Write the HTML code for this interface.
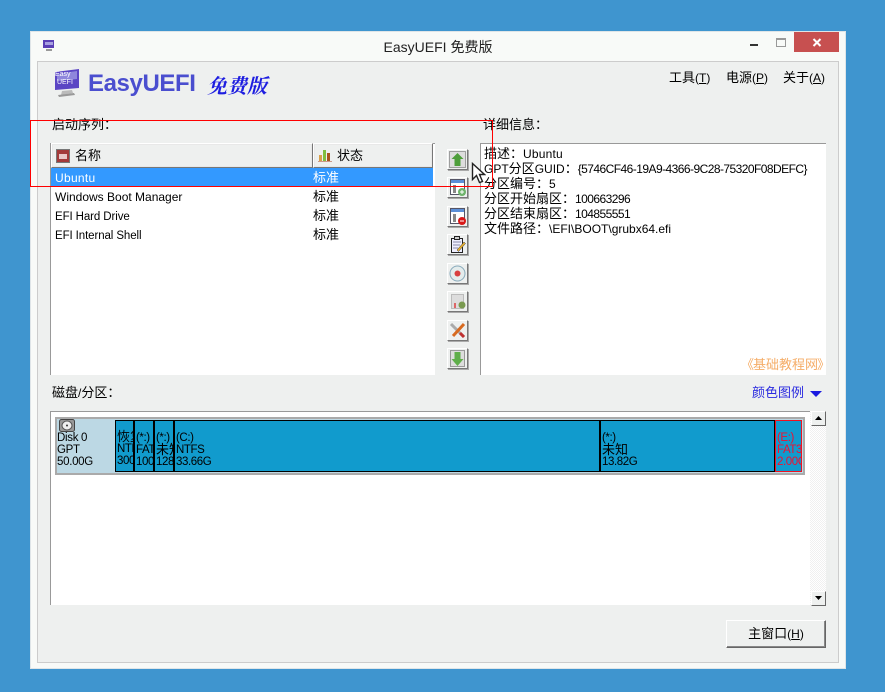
<!DOCTYPE html>
<html><head><meta charset="utf-8"><style>
*{box-sizing:border-box}
html,body{margin:0;padding:0;width:885px;height:692px;overflow:hidden;background:#3f95cf}
body{position:relative;font:13px "Liberation Sans","WenQuanYi Zen Hei","Noto Sans CJK SC",sans-serif;color:#000}
.a{position:absolute;white-space:nowrap}
.t{position:absolute;white-space:nowrap;line-height:15px}
.l{font-size:12px}
.n{font-size:12px;letter-spacing:-.55px}
.tb{position:absolute;left:447px;width:21px;height:21px;background:#eef0ef;border:1px solid;border-color:#fff #777 #777 #fff;box-shadow:1px 1px 0 #aaa}
.tb svg{display:block}
.p{position:absolute;top:420px;height:52px;background:#119bcd;border:1px solid #000;overflow:hidden;font-size:11.5px;letter-spacing:-.4px;line-height:12px;color:#000;padding-left:1px;padding-top:11px;white-space:nowrap}
.p span{display:block;height:12px}
.p .c{font-size:13px;letter-spacing:0}
.hd{position:absolute;top:143px;height:25px;background:#eef0ef;border:1px solid;border-color:#fff #777 #777 #fff;box-shadow:inset 0 0 0 1px #e8e8e8}
</style></head><body>
<div class="a" style="left:30px;top:31px;width:816px;height:638px;background:#f8faf8;border:1px solid #dfe5e8"></div>
<svg class="a" style="left:42px;top:39px" width="14" height="14" viewBox="0 0 14 14"><rect x="1" y="1" width="11" height="8" fill="#5a3fb5"/><rect x="3" y="3" width="8" height="3" fill="#a8a0e0"/><rect x="4" y="10" width="6" height="2" fill="#999"/></svg>
<div class="t" style="left:338px;width:200px;top:39px;text-align:center;font-size:14px;line-height:16px;color:#222">EasyUEFI 免费版</div>
<div class="a" style="left:750px;top:44px;width:8px;height:2px;background:#333"></div>
<div class="a" style="left:776px;top:38px;width:10px;height:9px;border:1px solid #999;border-top:2px solid #999;background:#f8faf8"></div>
<div class="a" style="left:794px;top:32px;width:45px;height:20px;background:#c75050"></div>
<svg class="a" style="left:812px;top:38px" width="10" height="9" viewBox="0 0 10 9"><path d="M1.500 1l7 7M8.500 1l-7 7" stroke="#fff" stroke-width="2"/></svg>

<div class="a" style="left:37px;top:61px;width:802px;height:602px;background:#eef0ef;border:1px solid #ccc"></div>

<svg class="a" style="left:53px;top:68px" width="28" height="30" viewBox="0 0 28 30"><path d="M2 4l24-3v19l-24 2z" fill="#5b45c4"/><path d="M4 6l20-3v8l-20 2z" fill="#8f86dc"/><path d="M9 23l10-1 1 3-12 2z" fill="#bbb"/><path d="M5 27l16-2 1 2-16 2z" fill="#999"/></svg>
<div class="t" style="left:55px;top:71px;font-size:7px;line-height:8px;color:#fff">Easy<br>&nbsp;UEFI</div>
<div class="t" style="left:88px;top:69px;font-size:24px;font-weight:bold;line-height:29px;color:#4a4ecf;letter-spacing:-.4px">EasyUEFI</div>
<div class="t" style="left:207px;top:73px;font-size:20px;line-height:24px;font-style:italic;font-weight:bold;color:#1d1de0;font-family:'Noto Serif CJK SC',serif">免费版</div>

<div class="t" style="left:669px;top:70px">工具<span class="l">(<u>T</u>)</span></div>
<div class="t" style="left:726px;top:70px">电源<span class="l">(<u>P</u>)</span></div>
<div class="t" style="left:783px;top:70px">关于<span class="l">(<u>A</u>)</span></div>

<div class="t" style="left:52px;top:117px">启动序列：</div>
<div class="t" style="left:483px;top:117px">详细信息：</div>

<div class="a" style="left:50px;top:143px;width:385px;height:232px;background:#fff;border-left:1px solid #999;border-top:1px solid #999"></div>
<div class="hd" style="left:51px;width:262px"></div>
<div class="hd" style="left:313px;width:120px"></div>
<svg class="a" style="left:56px;top:149px" width="14" height="14" viewBox="0 0 14 14"><rect x=".5" y=".5" width="13" height="13" fill="#a33a3a" stroke="#777"/><rect x="3" y="5" width="8" height="5" fill="#e8c8c8"/></svg>
<div class="t" style="left:75px;top:148px">名称</div>
<svg class="a" style="left:318px;top:148px" width="14" height="14" viewBox="0 0 14 14"><rect x="1" y="7" width="3" height="6" fill="#d9a04a"/><rect x="5" y="2" width="3" height="11" fill="#7fbf3f"/><rect x="9" y="5" width="3" height="8" fill="#a8541c"/><rect x="0" y="13" width="14" height="1" fill="#c98"/></svg>
<div class="t" style="left:337px;top:148px">状态</div>

<div class="a" style="left:51px;top:168px;width:382px;height:18px;background:#3399ff"></div>
<div class="t" style="left:55px;top:170px;color:#fff"><span class="l" style="letter-spacing:.3px">Ubuntu</span></div><div class="t" style="left:313px;top:170px;color:#fff">标准</div>
<div class="t" style="left:55px;top:189px"><span class="l">Windows Boot Manager</span></div><div class="t" style="left:313px;top:189px">标准</div>
<div class="t" style="left:55px;top:208px"><span style="font-size:11.5px;letter-spacing:-.1px">EFI Hard Drive</span></div><div class="t" style="left:313px;top:208px">标准</div>
<div class="t" style="left:55px;top:227px"><span style="font-size:11.5px;letter-spacing:-.1px">EFI Internal Shell</span></div><div class="t" style="left:313px;top:227px">标准</div>

<div class="tb" style="top:149px"><svg width="19" height="19" viewBox="0 0 19 19"><rect x="1.500" y="1.500" width="16" height="16" fill="#ddd" stroke="#555" stroke-dasharray="1 1"/><path d="M9.500 3l6 6h-3v7h-6V9h-3z" fill="#4d9e3a"/></svg></div>
<div class="tb" style="top:177px"><svg width="19" height="19" viewBox="0 0 19 19"><rect x="2.500" y="1.500" width="14" height="15" fill="#fff" stroke="#556"/><rect x="3" y="2" width="13" height="3" fill="#5b8fd8"/><rect x="5" y="7" width="3" height="8" fill="#888"/><circle cx="14" cy="14" r="4" fill="#6db36a"/><path d="M14 12v4M12 14h4" stroke="#fff"/></svg></div>
<div class="tb" style="top:206px"><svg width="19" height="19" viewBox="0 0 19 19"><rect x="2.500" y="1.500" width="14" height="15" fill="#fff" stroke="#556"/><rect x="3" y="2" width="13" height="3" fill="#5b8fd8"/><rect x="5" y="7" width="3" height="8" fill="#888"/><circle cx="14" cy="14" r="4" fill="#d81818"/><path d="M12 14h4" stroke="#fff"/></svg></div>
<div class="tb" style="top:234px"><svg width="19" height="19" viewBox="0 0 19 19"><rect x="3.500" y="3.500" width="11" height="14" fill="#eef" stroke="#222"/><rect x="6.500" y="1.500" width="5" height="3" fill="#ccc" stroke="#222"/><path d="M5 7h8M5 10h7M5 13h5" stroke="#88a"/><path d="M9 15l7-8 1.500 1.500-7 8z" fill="#e8b030" stroke="#333" stroke-width=".5"/></svg></div>
<div class="tb" style="top:263px"><svg width="19" height="19" viewBox="0 0 19 19"><circle cx="9.500" cy="9.500" r="7.500" fill="#e4ecec" stroke="#8ab"/><circle cx="9.500" cy="9.500" r="3" fill="#d84040"/></svg></div>
<div class="tb" style="top:291px"><svg width="19" height="19" viewBox="0 0 19 19"><rect x="3.500" y="2.500" width="12" height="14" fill="#ddd" stroke="#bbb"/><rect x="6" y="11" width="2" height="5" fill="#d66"/><circle cx="14" cy="13" r="3.500" fill="#7a9a50"/></svg></div>
<div class="tb" style="top:320px"><svg width="19" height="19" viewBox="0 0 19 19"><path d="M3 3l13 13" stroke="#aaa" stroke-width="3"/><path d="M16 3L5 15" stroke="#d86a20" stroke-width="3"/><path d="M12 12l4 4" stroke="#c03030" stroke-width="3"/></svg></div>
<div class="tb" style="top:348px"><svg width="19" height="19" viewBox="0 0 19 19"><rect x="2.500" y="1.500" width="14" height="16" fill="#ddd" stroke="#999"/><path d="M9.500 17l6-7h-3V3h-6v7h-3z" fill="#5fae4a"/></svg></div>

<div class="a" style="left:480px;top:143px;width:346px;height:232px;background:#fff;border-left:1px solid #999;border-top:1px solid #999"></div>
<div class="t" style="left:484px;top:146px">描述：<span class="l" style="letter-spacing:.2px">Ubuntu</span></div>
<div class="t" style="left:484px;top:161px"><span class="l">GPT</span>分区<span class="l">GUID</span>：<span class="n">{5746CF46-19A9-4366-9C28-75320F08DEFC}</span></div>
<div class="t" style="left:484px;top:176px">分区编号：<span class="l">5</span></div>
<div class="t" style="left:484px;top:191px">分区开始扇区：<span class="n">100663296</span></div>
<div class="t" style="left:484px;top:206px">分区结束扇区：<span class="n">104855551</span></div>
<div class="t" style="left:484px;top:221px">文件路径：<span class="l">\EFI\BOOT\grubx64.efi</span></div>
<div class="t" style="left:741px;top:357px;color:#f5ad68;font-size:13px">《</div>
<div class="t" style="left:753px;top:357px;color:#f5ad68;font-size:13px">基础教程网</div>
<div class="t" style="left:817px;top:357px;color:#f5ad68;font-size:13px">》</div>

<div class="t" style="left:52px;top:385px">磁盘<span class="l">/</span>分区：</div>
<div class="t" style="left:752px;top:385px;color:#2a2ae0">颜色图例</div>
<svg class="a" style="left:810px;top:391px" width="12" height="7"><path d="M0 0h12L6 6z" fill="#1a1ae0"/></svg>

<div class="a" style="left:50px;top:411px;width:760px;height:194px;background:#fff;border-left:1px solid #999;border-top:1px solid #999"></div>
<div class="a" style="left:55px;top:417px;width:750px;height:58px;border:2px solid #aaa;background:#bcd8e4"></div>
<svg class="a" style="left:59px;top:419px" width="16" height="13" viewBox="0 0 16 13"><rect x=".5" y=".5" width="15" height="12" rx="2" fill="#999" stroke="#444"/><ellipse cx="8" cy="6.500" rx="5" ry="4.500" fill="#eee" stroke="#555"/><circle cx="8" cy="6.500" r="1" fill="#333"/></svg>
<div class="a" style="left:57px;top:432px;font-size:11.5px;letter-spacing:-.3px;line-height:12px">Disk 0<br>GPT<br>50.00G</div>
<div class="p" style="left:115px;width:19px;padding-top:10px"><span class="c">恢复</span><span>NTFS</span><span>300M</span></div>
<div class="p" style="left:134px;width:20px"><span>(*:)</span><span>FAT32</span><span>100M</span></div>
<div class="p" style="left:154px;width:20px"><span>(*:)</span><span class="c">未知</span><span>128M</span></div>
<div class="p" style="left:174px;width:426px"><span>(C:)</span><span>NTFS</span><span>33.66G</span></div>
<div class="p" style="left:600px;width:175px"><span>(*:)</span><span class="c">未知</span><span>13.82G</span></div>
<div class="p" style="left:775px;width:27px;border-color:#f01020;color:#f01030"><span>(E:)</span><span>FAT32</span><span>2.00G</span></div>

<div class="a" style="left:810px;top:411px;width:16px;height:194px;background:repeating-conic-gradient(#f0f0f0 0 25%,#fff 0 50%) 0 0/2px 2px"></div>
<div class="a" style="left:811px;top:411px;width:15px;height:15px;background:#eef0ef;border:1px solid;border-color:#fff #666 #666 #fff"></div>
<svg class="a" style="left:815px;top:416px" width="7" height="4"><path d="M0 4h7L3.500 0z" fill="#000"/></svg>
<div class="a" style="left:811px;top:591px;width:15px;height:15px;background:#eef0ef;border:1px solid;border-color:#fff #666 #666 #fff"></div>
<svg class="a" style="left:815px;top:596px" width="7" height="4"><path d="M0 0h7L3.500 4z" fill="#000"/></svg>

<div class="a" style="left:726px;top:620px;width:100px;height:28px;background:#eef0ef;border:1px solid;border-color:#fff #666 #666 #fff;box-shadow:inset -1px -1px 0 #888"></div>
<div class="t" style="left:726px;width:100px;top:626px;text-align:center">主窗口<span class="l">(<u>H</u>)</span></div>

<div class="a" style="left:30px;top:120px;width:463px;height:67px;border:1px solid #f00"></div>
<svg class="a" style="left:471px;top:162px" width="15" height="22" viewBox="0 0 15 22"><path d="M1.500 1.500v16l4-4 3 7 3-1-3-7h5z" fill="#fff" stroke="#222" stroke-width="1.400"/></svg>
</body></html>
